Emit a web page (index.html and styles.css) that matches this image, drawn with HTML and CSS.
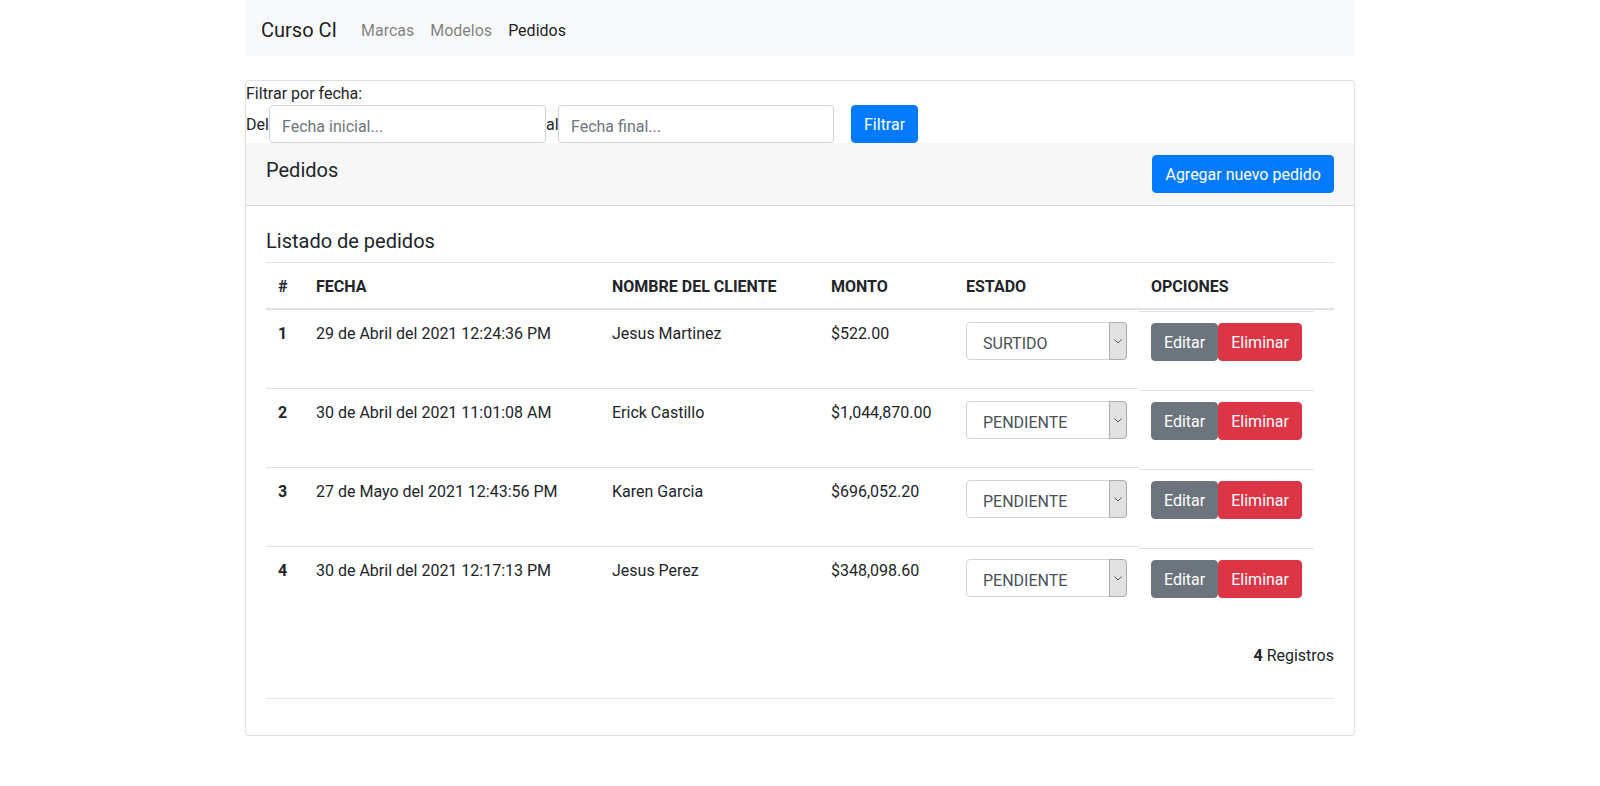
FILE: index.html
```html
<!DOCTYPE html>
<html lang="es">
<head>
<meta charset="utf-8">
<title>Curso CI - Pedidos</title>
<link rel="stylesheet" href="styles.css">
</head>
<body>
<div class="container">
  <nav class="navbar">
    <a class="navbar-brand" href="#">Curso CI</a>
    <a class="nav-link" href="#">Marcas</a>
    <a class="nav-link" href="#">Modelos</a>
    <a class="nav-link active" href="#">Pedidos</a>
  </nav>

  <div class="card">
    <form class="filter">
      <div class="filter-title">Filtrar por fecha:</div>
      <div class="filter-row">
        <span class="lbl lbl-del">Del</span>
        <input class="form-control input-start" type="text" placeholder="Fecha inicial...">
        <span class="lbl lbl-al">al</span>
        <input class="form-control input-end" type="text" placeholder="Fecha final...">
        <button class="btn btn-primary btn-filter" type="button">Filtrar</button>
      </div>
    </form>

    <div class="card-header">
      <h5 class="header-title">Pedidos</h5>
      <button class="btn btn-primary" type="button">Agregar nuevo pedido</button>
    </div>

    <div class="card-body">
      <h5 class="card-title">Listado de pedidos</h5>
      <table class="table">
        <thead>
          <tr>
            <th class="col-num">#</th>
            <th class="col-fecha">FECHA</th>
            <th class="col-cliente">NOMBRE DEL CLIENTE</th>
            <th class="col-monto">MONTO</th>
            <th class="col-estado">ESTADO</th>
            <th class="col-opciones">OPCIONES</th>
          </tr>
        </thead>
        <tbody>
          <tr>
            <th class="row-num">1</th>
            <td>29 de Abril del 2021 12:24:36 PM</td>
            <td>Jesus Martinez</td>
            <td>$522.00</td>
            <td>
              <div class="select-wrap">
                <select class="form-select"><option>SURTIDO</option><option>PENDIENTE</option></select>
                <span class="select-arrow"><svg width="8" height="5" viewBox="0 0 8 5"><polyline points="0.5,0.5 4,4 7.5,0.5" fill="none" stroke="#555" stroke-width="1"/></svg></span>
              </div>
            </td>
            <td class="cell-options"><div class="options-inner"><button class="btn btn-secondary" type="button">Editar</button><button class="btn btn-danger" type="button">Eliminar</button></div></td>
          </tr>
          <tr>
            <th class="row-num">2</th>
            <td>30 de Abril del 2021 11:01:08 AM</td>
            <td>Erick Castillo</td>
            <td>$1,044,870.00</td>
            <td>
              <div class="select-wrap">
                <select class="form-select"><option>PENDIENTE</option><option>SURTIDO</option></select>
                <span class="select-arrow"><svg width="8" height="5" viewBox="0 0 8 5"><polyline points="0.5,0.5 4,4 7.5,0.5" fill="none" stroke="#555" stroke-width="1"/></svg></span>
              </div>
            </td>
            <td class="cell-options"><div class="options-inner"><button class="btn btn-secondary" type="button">Editar</button><button class="btn btn-danger" type="button">Eliminar</button></div></td>
          </tr>
          <tr>
            <th class="row-num">3</th>
            <td>27 de Mayo del 2021 12:43:56 PM</td>
            <td>Karen Garcia</td>
            <td>$696,052.20</td>
            <td>
              <div class="select-wrap">
                <select class="form-select"><option>PENDIENTE</option><option>SURTIDO</option></select>
                <span class="select-arrow"><svg width="8" height="5" viewBox="0 0 8 5"><polyline points="0.5,0.5 4,4 7.5,0.5" fill="none" stroke="#555" stroke-width="1"/></svg></span>
              </div>
            </td>
            <td class="cell-options"><div class="options-inner"><button class="btn btn-secondary" type="button">Editar</button><button class="btn btn-danger" type="button">Eliminar</button></div></td>
          </tr>
          <tr>
            <th class="row-num">4</th>
            <td>30 de Abril del 2021 12:17:13 PM</td>
            <td>Jesus Perez</td>
            <td>$348,098.60</td>
            <td>
              <div class="select-wrap">
                <select class="form-select"><option>PENDIENTE</option><option>SURTIDO</option></select>
                <span class="select-arrow"><svg width="8" height="5" viewBox="0 0 8 5"><polyline points="0.5,0.5 4,4 7.5,0.5" fill="none" stroke="#555" stroke-width="1"/></svg></span>
              </div>
            </td>
            <td class="cell-options"><div class="options-inner"><button class="btn btn-secondary" type="button">Editar</button><button class="btn btn-danger" type="button">Eliminar</button></div></td>
          </tr>
        </tbody>
      </table>
      <p class="count"><strong>4</strong> Registros</p>
      <hr class="divider">
    </div>
  </div>
</div>
</body>
</html>
```

FILE: styles.css
```css
*, *::before, *::after { box-sizing: border-box; }

body {
  margin: 0;
  font-family: "Segoe UI", Roboto, "Noto Sans", sans-serif;
  font-size: 16px;
  line-height: 1.5;
  color: #212529;
  background: #fff;
}

.container {
  width: 1110px;
  margin: 0 auto;
}

/* Navbar */
.navbar {
  display: flex;
  align-items: center;
  height: 56px;
  padding: 11px 16px 5px;
  background: #f8f9fa;
}
.navbar a { text-decoration: none; }
.navbar-brand {
  font-size: 20px;
  line-height: 30px;
  padding: 4px 0 6px;
  margin-right: 16px;
  color: rgba(0, 0, 0, 0.9);
}
.nav-link {
  padding: 8px;
  color: rgba(0, 0, 0, 0.5);
}
.nav-link.active { color: rgba(0, 0, 0, 0.9); }

/* Card */
.card {
  margin-top: 24px;
  border: 1px solid rgba(0, 0, 0, 0.125);
  border-radius: 4px;
}

.filter { margin: 0; }
.filter-title {
  line-height: 22px;
  padding-top: 2px;
}
.filter-row {
  display: flex;
  align-items: center;
}
.lbl {
  display: inline-block;
  padding-top: 2px;
}
.lbl-del { width: 23px; }
.lbl-al { width: 12px; }

.form-control {
  height: 38px;
  padding: 8px 12px 4px;
  font-family: inherit;
  font-size: 16px;
  color: #495057;
  background: #fff;
  border: 1px solid #ced4da;
  border-radius: 4px;
}
.form-control::placeholder { color: #6c757d; }
.input-start { width: 277px; }
.input-end { width: 276px; }

.btn {
  display: inline-block;
  padding: 7px 12px 5px;
  font-family: inherit;
  font-size: 16px;
  line-height: 24px;
  border: 1px solid transparent;
  border-radius: 4px;
  color: #fff;
  cursor: pointer;
}
.btn-primary { background: #007bff; border-color: #007bff; }
.btn-secondary { background: #6c757d; border-color: #6c757d; }
.btn-danger { background: #dc3545; border-color: #dc3545; }
.btn-filter { margin-left: 17px; }

.card-header {
  display: flex;
  justify-content: space-between;
  align-items: flex-start;
  padding: 12px 20px;
  background: rgba(0, 0, 0, 0.03);
  border-bottom: 1px solid rgba(0, 0, 0, 0.125);
}
.header-title,
.card-title {
  margin: 0;
  padding-top: 3px;
  font-size: 20px;
  line-height: 24px;
  font-weight: 400;
}

.card-body { padding: 20px; }
.card-title { margin-bottom: 9px; }

/* Table */
.table {
  width: 100%;
  table-layout: fixed;
  border-collapse: collapse;
  margin-bottom: 19px;
  color: #212529;
}
.table thead th {
  text-align: left;
  font-weight: 700;
  padding: 12px 12px 9px;
  border-top: 1px solid #dee2e6;
  border-bottom: 2px solid #dee2e6;
  vertical-align: bottom;
}
.table td,
.table tbody th {
  padding: 12px;
  border-top: 1px solid #dee2e6;
  vertical-align: top;
  text-align: left;
}
.row-num { font-weight: 700; }

.col-num { width: 38px; }
.col-fecha { width: 296px; }
.col-cliente { width: 219px; }
.col-monto { width: 135px; }
.col-estado { width: 185px; }

.select-wrap {
  position: relative;
  width: 161px;
  height: 38px;
  margin-bottom: 16px;
}
.form-select {
  appearance: none;
  -webkit-appearance: none;
  width: 100%;
  height: 38px;
  padding: 4px 20px 0 16px;
  font-family: inherit;
  font-size: 16px;
  color: #495057;
  background: #fff;
  border: 1px solid #ced4da;
  border-radius: 4px;
}
.select-arrow {
  position: absolute;
  top: 0;
  right: 0;
  width: 18px;
  height: 38px;
  display: flex;
  align-items: center;
  justify-content: center;
  background: #e1e1e1;
  border: 1px solid #adadad;
  border-radius: 0 4px 4px 0;
  pointer-events: none;
}

.table td.cell-options {
  padding: 0;
  border-top: none;
}
.options-inner {
  display: flex;
  width: fit-content;
  padding: 11px 12px 12px;
  margin-top: 1px;
  border-top: 1px solid #dee2e6;
}

.count {
  margin: 0;
  text-align: right;
  line-height: 24px;
}

.divider {
  margin: 30px 0 16px;
  border: 0;
  border-top: 1px solid rgba(0, 0, 0, 0.1);
}
```
